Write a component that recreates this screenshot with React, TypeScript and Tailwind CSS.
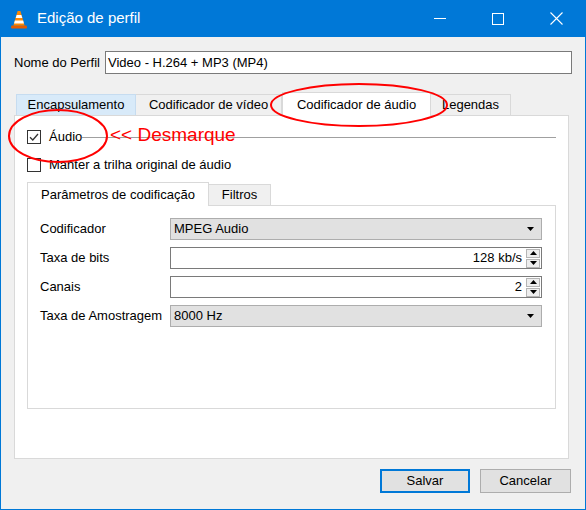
import React from "react";

function VlcIcon() {
  return (
    <svg width="18" height="19" viewBox="0 0 18 19">
      <path d="M1.5 15.5 L16.5 15.5 L17 17.5 Q17 18.5 16 18.5 L2 18.5 Q1 18.5 1 17.5 Z" fill="#e65c00" />
      <path d="M7.6 1 L10.4 1 L14.6 15.5 L3.4 15.5 Z" fill="#ff8800" />
      <path d="M6.6 5 L11.4 5 L12.3 8 L5.7 8 Z" fill="#ffffff" />
      <path d="M4.9 10.5 L13.1 10.5 L14 13.5 L4 13.5 Z" fill="#ffffff" />
    </svg>
  );
}

function Checkbox({ checked }: { checked?: boolean }) {
  return (
    <div className="w-[14px] h-[14px] border border-[#333333] bg-white flex items-center justify-center shrink-0">
      {checked && (
        <svg width="10" height="10" viewBox="0 0 10 10">
          <path d="M1 5.2 L3.8 8 L9 2" fill="none" stroke="#333333" strokeWidth="1.3" />
        </svg>
      )}
    </div>
  );
}

function Combo({ value }: { value: string }) {
  return (
    <div className="w-[372px] h-[22px] bg-[#e1e1e1] border border-[#adadad] flex items-center pl-[3px] pr-[7px]">
      <span className="flex-1">{value}</span>
      <svg width="7" height="4" viewBox="0 0 7 4">
        <path d="M0 0 L7 0 L3.5 4 Z" fill="#000" />
      </svg>
    </div>
  );
}

function Spin({ value }: { value: string }) {
  return (
    <div className="w-[372px] h-[22px] bg-white border border-[#7a7a7a] flex items-center">
      <span className="flex-1 text-right pr-[4px]">{value}</span>
      <div className="flex flex-col gap-[1px] mr-[1px]">
        <div className="w-[14px] h-[9px] bg-[#eeeeee] border border-[#b5b5b5] flex items-center justify-center">
          <svg width="7" height="4" viewBox="0 0 7 4"><path d="M0 4 L7 4 L3.5 0 Z" fill="#000" /></svg>
        </div>
        <div className="w-[14px] h-[9px] bg-[#eeeeee] border border-[#b5b5b5] flex items-center justify-center">
          <svg width="7" height="4" viewBox="0 0 7 4"><path d="M0 0 L7 0 L3.5 4 Z" fill="#000" /></svg>
        </div>
      </div>
    </div>
  );
}

export default function App() {
  return (
    <div className="relative w-[586px] h-[510px] bg-[#f0f0f0] border-x border-b border-[#0078d7] flex flex-col text-[13px] text-black font-['Liberation_Sans',Arial,sans-serif] overflow-hidden">
      {/* title bar */}
      <div className="h-[37px] bg-[#0078d7] flex items-center text-white shrink-0">
        <div className="ml-[9px] mt-[1px]">
          <VlcIcon />
        </div>
        <span className="ml-[9px] text-[15px]">Edição de perfil</span>
        <div className="ml-auto flex h-full">
          <div className="w-[58px] flex items-center justify-center">
            <div className="w-[12px] h-px bg-white" />
          </div>
          <div className="w-[58px] flex items-center justify-center">
            <div className="w-[12px] h-[12px] border border-white" />
          </div>
          <div className="w-[58px] flex items-center justify-center">
            <svg width="13" height="13" viewBox="0 0 13 13">
              <path d="M0.5 0.5 L12.5 12.5 M12.5 0.5 L0.5 12.5" stroke="#fff" strokeWidth="1.1" />
            </svg>
          </div>
        </div>
      </div>

      {/* profile name */}
      <div className="flex items-center mt-[14px] pl-[13px] pr-[13px] h-[23px]">
        <span className="w-[91px]">Nome do Perfil</span>
        <div className="flex-1 h-[23px] bg-white border border-[#7a7a7a] flex items-center pl-[2px]">
          Video - H.264 + MP3 (MP4)
        </div>
      </div>

      {/* tabs */}
      <div className="mt-[18px] ml-[13px] mr-[16px] flex flex-col">
        <div className="flex items-end h-[23px] pl-[2px]">
          <div className="w-[120px] h-[21px] bg-[#d8eaf9] border border-b-0 border-[#c6dcf0] flex items-center justify-center">
            Encapsulamento
          </div>
          <div className="w-[146px] h-[21px] bg-[#f0f0f0] border border-b-0 border-l-0 border-[#d9d9d9] flex items-center justify-center">
            Codificador de vídeo
          </div>
          <div className="relative z-10 -mb-px w-[149px] h-[24px] bg-white border border-b-0 border-[#d9d9d9] flex items-center justify-center">
            Codificador de áudio
          </div>
          <div className="w-[80px] h-[21px] bg-[#f0f0f0] border border-b-0 border-l-0 border-[#d9d9d9] flex items-center justify-center">
            Legendas
          </div>
        </div>

        <div className="h-[344px] bg-white border border-[#d9d9d9] flex flex-col px-[12px] pt-[13px]">
          <div className="flex items-center h-[16px] gap-[8px]">
            <Checkbox checked />
            <span>Áudio</span>
            <div className="flex-1 h-px bg-[#a0a0a0] -ml-[8px]" />
          </div>
          <div className="flex items-center h-[16px] gap-[8px] mt-[12px]">
            <Checkbox />
            <span>Manter a trilha original de áudio</span>
          </div>

          {/* inner tabs */}
          <div className="mt-[9px] flex items-end h-[23px]">
            <div className="relative z-10 -mb-px w-[182px] h-[24px] bg-white border border-b-0 border-[#d9d9d9] flex items-center justify-center">
              Parâmetros de codificação
            </div>
            <div className="w-[62px] h-[21px] bg-[#f0f0f0] border border-b-0 border-l-0 border-[#d9d9d9] flex items-center justify-center">
              Filtros
            </div>
          </div>
          <div className="h-[204px] bg-white border border-[#d9d9d9] pl-[12px] pt-[12px] flex flex-col gap-[7px]">
            <div className="flex items-center">
              <span className="w-[130px]">Codificador</span>
              <Combo value="MPEG Audio" />
            </div>
            <div className="flex items-center">
              <span className="w-[130px]">Taxa de bits</span>
              <Spin value="128 kb/s" />
            </div>
            <div className="flex items-center">
              <span className="w-[130px]">Canais</span>
              <Spin value="2" />
            </div>
            <div className="flex items-center">
              <span className="w-[130px]">Taxa de Amostragem</span>
              <Combo value="8000 Hz" />
            </div>
          </div>
        </div>
      </div>

      {/* buttons */}
      <div className="mt-[10px] flex justify-end gap-[10px] mr-[14px]">
        <button className="w-[90px] h-[24px] bg-[#e1e1e1] border-2 border-[#0078d7] flex items-center justify-center">
          Salvar
        </button>
        <button className="w-[91px] h-[24px] bg-[#e1e1e1] border border-[#adadad] flex items-center justify-center">
          Cancelar
        </button>
      </div>

      {/* red annotation overlay */}
      <svg className="absolute left-0 top-0 pointer-events-none z-20" width="586" height="510">
        <ellipse cx="57" cy="136" rx="49" ry="26" fill="none" stroke="#ff0000" strokeWidth="2" />
        <ellipse cx="358" cy="105" rx="88" ry="21" fill="none" stroke="#ff0000" strokeWidth="2" />
      </svg>
      <span className="absolute left-[109px] top-[123px] z-20 text-[19px] leading-[24px] text-[#ff0000]">
        &lt;&lt; Desmarque
      </span>
    </div>
  );
}
